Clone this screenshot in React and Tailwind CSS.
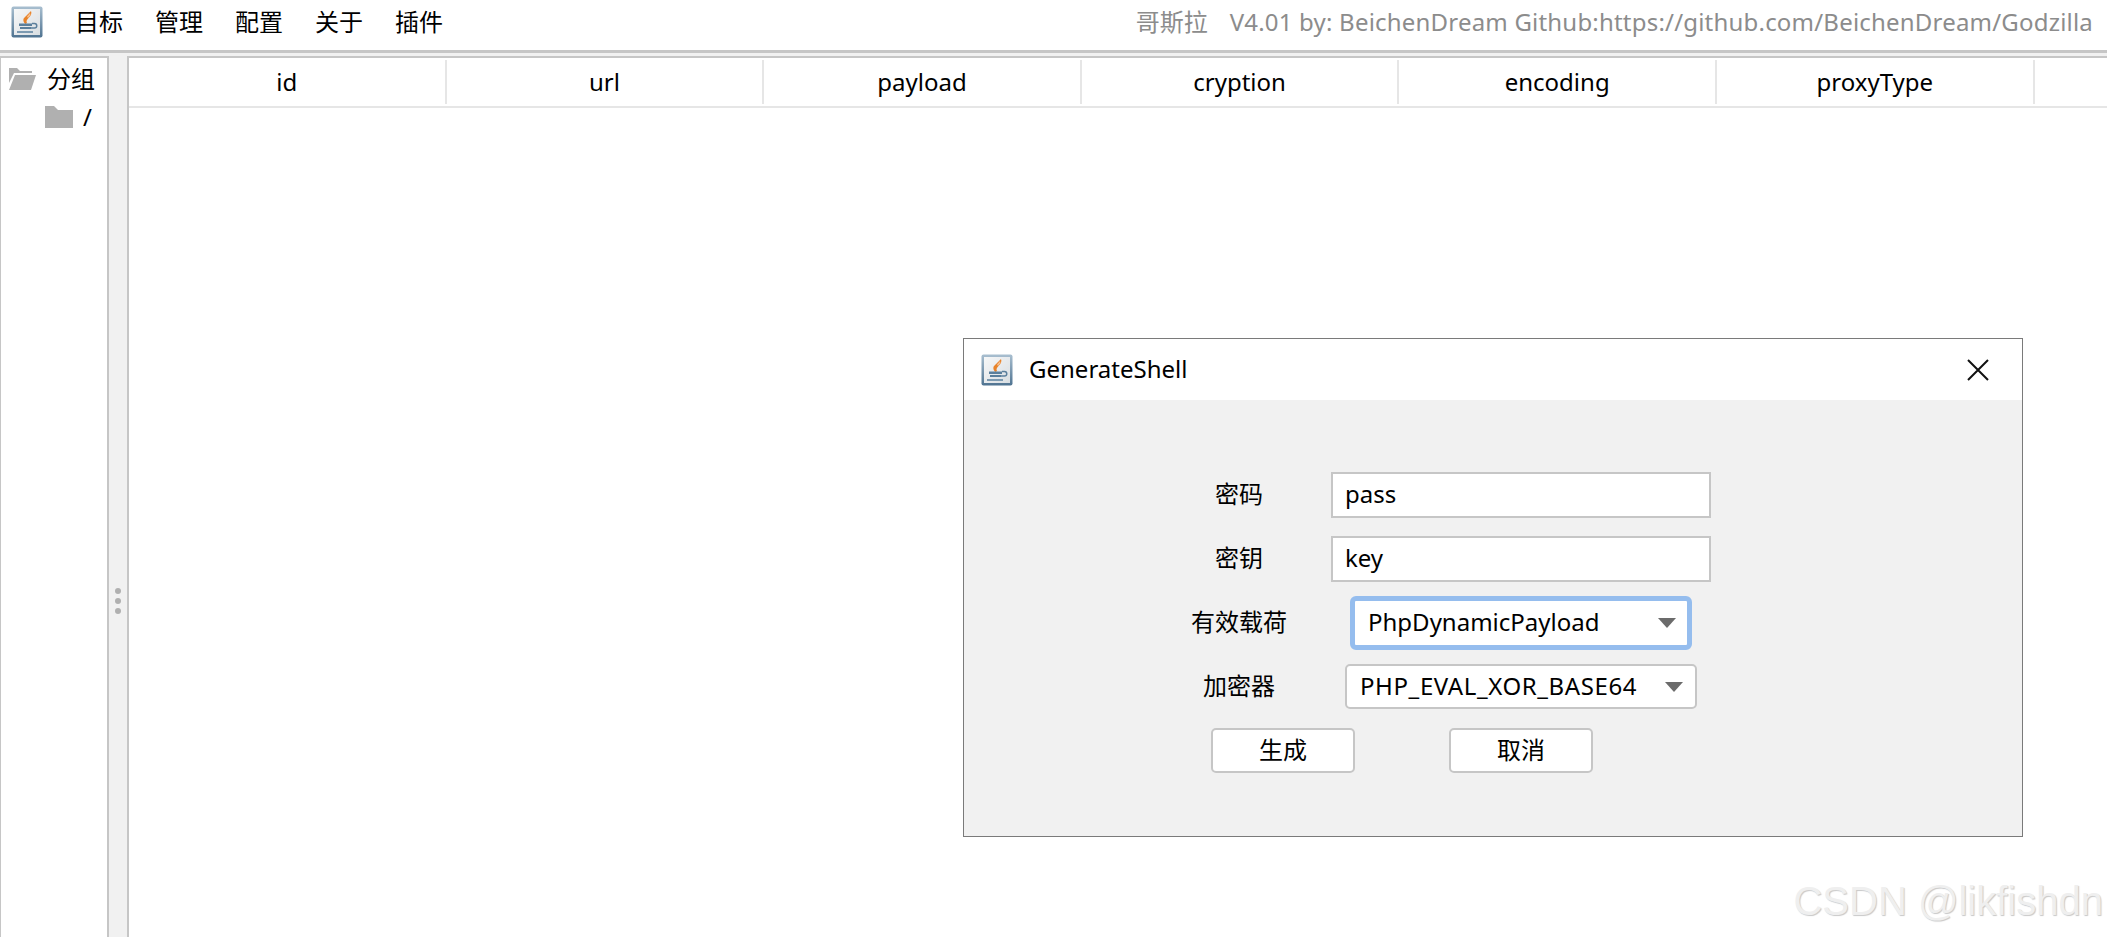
const ui = "font-['Noto_Sans','Noto_Sans_CJK_SC',sans-serif]";

function JavaIcon() {
  return (
    <svg width="32" height="32" viewBox="0 0 32 32" className="shrink-0">
      <defs>
        <linearGradient id="frame" x1="0" y1="0" x2="0" y2="1">
          <stop offset="0" stopColor="#a9bfd0" />
          <stop offset="1" stopColor="#4f7391" />
        </linearGradient>
        <linearGradient id="face" x1="0" y1="0" x2="1" y2="1">
          <stop offset="0" stopColor="#f6f7f8" />
          <stop offset="1" stopColor="#d9dee2" />
        </linearGradient>
      </defs>
      <rect x="0.5" y="0.5" width="31" height="31" rx="2" fill="url(#frame)" />
      <rect x="3" y="3" width="26" height="26" fill="url(#face)" />
      <path d="M20 5l-7 7c-1.500 2 0 5 1.500 6l1.500-1c-1-1.500-.5-3 1.500-5 2.500-2.500 3.500-4.500 2.500-7z" fill="#e8832a" />
      <path d="M19 7l-3 3.500 1 1.500 2.500-3z" fill="#f6bd8b" />
      <path d="M8 17.500h13v2.500h-13zM9 21h11v2h-11z" fill="#5b7f9c" />
      <path d="M21 17.500h2.500a2 2 0 0 1 0 4.500H20" fill="none" stroke="#5b7f9c" strokeWidth="1.500" />
      <rect x="6" y="25" width="16" height="2" fill="#7c9ab1" />
    </svg>
  );
}

function FolderOpen() {
  return (
    <svg width="27" height="22" viewBox="0 0 27 22" fill="#b0b0b0">
      <path d="M0 0h8l3 3h12v2H5L0 15z" />
      <path d="M6 7h21l-5 15H0z" />
    </svg>
  );
}

function Folder() {
  return (
    <svg width="28" height="22" viewBox="0 0 28 22" fill="#b0b0b0">
      <path d="M0 0h9l4 4h15v18H0z" />
    </svg>
  );
}

function ComboBox({ text, className }) {
  return (
    <div className={`flex items-center justify-between bg-white ${className}`}>
      <span className="pb-[2px]">{text}</span>
      <span className="h-0 w-0 border-x-[9px] border-t-[10px] border-x-transparent border-t-[#6b6b6b]" />
    </div>
  );
}

function App() {
  const columns = ["id", "url", "payload", "cryption", "encoding", "proxyType"];

  return (
    <div className={`relative flex h-[937px] w-[2107px] flex-col overflow-hidden bg-[#f1f1f1] text-[24px] text-black ${ui}`}>
      <div className="flex h-[50px] items-center bg-white pb-[6px] pl-[11px] pr-[14px]">
        <JavaIcon />
        <div className="ml-[32px] flex gap-[32px]">
          {["目标", "管理", "配置", "关于", "插件"].map((item) => (
            <span key={item} className="w-[48px] leading-none">{item}</span>
          ))}
        </div>
        <div className="ml-auto text-[#8c8c8c]">
          <span>哥斯拉</span>
          <span className="ml-[22px] tracking-[0.2px]">V4.01 by: BeichenDream Github:https://github.com/BeichenDream/Godzilla</span>
        </div>
      </div>
      <div className="h-[3px] bg-[#c6c6c6]" />

      <div className="mt-[3px] flex min-h-0 flex-1">
        <div className="w-[109px] border-x-2 border-t-2 border-l-[1px] border-[#c6c6c6] bg-white pt-[2px]">
          <div className="flex h-[38px] items-center pl-[8px]">
            <FolderOpen />
            <span className="ml-[11px]">分组</span>
          </div>
          <div className="flex h-[38px] items-center pl-[44px]">
            <Folder />
            <span className="ml-[10px]">/</span>
          </div>
        </div>

        <div className="flex w-[18px] flex-col items-center gap-[4px] pt-[532px]">
          <span className="h-[6px] w-[6px] rounded-full bg-[#b0b0b0]" />
          <span className="h-[6px] w-[6px] rounded-full bg-[#b0b0b0]" />
          <span className="h-[6px] w-[6px] rounded-full bg-[#b0b0b0]" />
        </div>

        <div className="min-w-0 flex-1 border-l-2 border-t-2 border-[#c6c6c6] bg-white">
          <div className="flex h-[50px] items-center border-b-2 border-[#e6e6e6]">
            {columns.map((col) => (
              <div key={col} className="flex h-[44px] w-[317.6px] shrink-0 items-center justify-center border-r-2 border-[#e6e6e6]">
                {col}
              </div>
            ))}
          </div>
        </div>
      </div>

      {/* dialog window */}
      <div className="absolute left-[963px] top-[338px] h-[499px] w-[1060px] border border-[#7a7a7a] bg-[#f1f1f1]">
        <div className="flex h-[61px] items-center bg-white pl-[17px] pr-[33px]">
          <JavaIcon />
          <span className="ml-[16px] pb-[2px]">GenerateShell</span>
          <svg width="22" height="22" viewBox="0 0 22 22" className="ml-auto" stroke="#111" strokeWidth="2">
            <path d="M1 1l20 20M21 1L1 21" />
          </svg>
        </div>

        <div className="grid grid-cols-[184px_380px] justify-start pl-[183px] pt-[72px]">
          <div className="flex h-[46px] items-center justify-center pb-[2px]">密码</div>
          <div className="flex h-[46px] items-center border-2 border-[#c6c6c6] bg-white pb-[2px] pl-[12px]">pass</div>

          <div className="mt-[18px] flex h-[46px] items-center justify-center pb-[2px]">密钥</div>
          <div className="mt-[18px] flex h-[46px] items-center border-2 border-[#c6c6c6] bg-white pb-[2px] pl-[12px]">key</div>

          <div className="mt-[14px] flex h-[54px] items-center justify-center pb-[2px]">有效载荷</div>
          <ComboBox
            text="PhpDynamicPayload"
            className="mx-[19px] mt-[14px] h-[54px] rounded-[6px] border-[5px] border-[#95bdee] pl-[13px] pr-[11px]"
          />

          <div className="mt-[14px] flex h-[45px] items-center justify-center pb-[2px]">加密器</div>
          <ComboBox
            text="PHP_EVAL_XOR_BASE64"
            className="mx-[14px] mt-[14px] h-[45px] rounded-[5px] border-2 border-[#c6c6c6] pl-[13px] pr-[12px] tracking-[0.6px]"
          />
        </div>

        <div className="ml-[247px] mt-[19px] flex gap-[94px]">
          <button className="h-[45px] w-[144px] rounded-[5px] border-2 border-[#c6c6c6] bg-white pb-[2px]">生成</button>
          <button className="h-[45px] w-[144px] rounded-[5px] border-2 border-[#c6c6c6] bg-white pb-[2px]">取消</button>
        </div>
      </div>

      <div className="absolute bottom-[16px] right-[4px] font-['Liberation_Sans',sans-serif] text-[40px] leading-none text-[#efefef] [text-shadow:1px_1px_1px_#c8c8c8]">
        CSDN @likfishdn
      </div>
    </div>
  );
}

export default App;
